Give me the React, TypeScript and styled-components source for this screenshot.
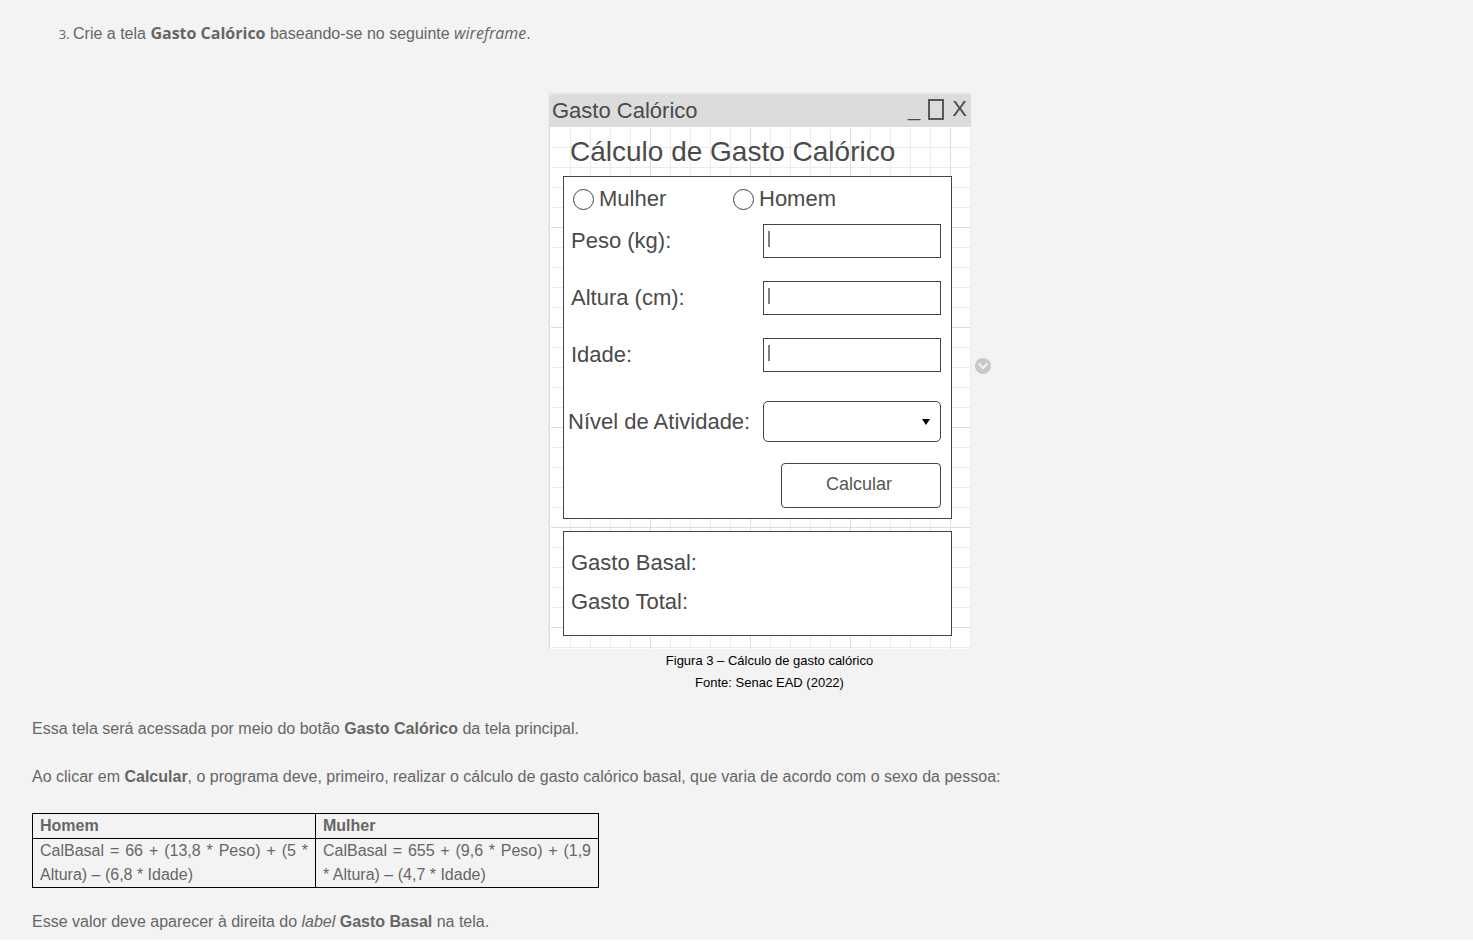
import React from "react";
import styled, { createGlobalStyle } from "styled-components";

const GlobalStyle = createGlobalStyle`
  *, *::before, *::after { box-sizing: border-box; }
  body {
    margin: 0;
    background: #fff;
    font-family: "Liberation Sans", Arial, sans-serif;
  }
`;

const Page = styled.main`
  padding: 21px 32px 6px;
  background: #f3f3f3;
  color: #666;
  font-size: 16px;
  line-height: 24px;
`;

const Steps = styled.ol`
  margin: 0;
  padding-left: 41px;
  font-family: "Open Sans", sans-serif;

  li::marker {
    font-size: 13px;
  }
`;

const StepText = styled.span`
  font-family: "Liberation Sans", Arial, sans-serif;

  strong, em {
    font-family: "Open Sans", sans-serif;
  }
`;

const Figure = styled.figure`
  display: flex;
  flex-direction: column;
  align-items: center;
  margin: 46px 0 23px 66px;
`;

const FigureRow = styled.div`
  display: flex;
  align-items: center;
  gap: 4px;
`;

const Caption = styled.figcaption`
  margin-top: 1px;
  color: #000;
  font-size: 13px;
  line-height: 22px;
  text-align: center;
`;

const ExpandButton = styled.button`
  display: flex;
  width: 16px;
  height: 16px;
  margin: 0 0 10px;
  padding: 0;
  border: 0;
  border-radius: 50%;
  background: #c8c8c8;
`;

const Wireframe = styled.section`
  width: 423px;
  border-top: 2px solid #ececec;
  border-left: 1px solid #ececec;
  background: #ececec;
  color: #4a4a4a;
  font-size: 22px;
`;

const TitleBar = styled.header`
  display: flex;
  align-items: center;
  justify-content: space-between;
  height: 33px;
  padding: 0 4px 0 3px;
  border-top-left-radius: 5px;
  background: #dcdcdc;
`;

const WindowControls = styled.div`
  display: flex;
  align-items: center;
  gap: 8px;
`;

const WindowButton = styled.button`
  display: flex;
  padding: 0 0 4px;
  border: 0;
  background: none;
  color: inherit;
  font: inherit;
  line-height: 24px;
`;

const Canvas = styled.div`
  padding: 0 19px 13px 13px;
  border-left: 1px solid #dcdcdc;
  background:
    linear-gradient(#fff, #fff) 0 0 / 1px 100% no-repeat,
    linear-gradient(#fff, #fff) 0 0 / 100% 1px no-repeat,
    linear-gradient(#dedede 1px, transparent 1px) 0 0 / 100px 100px,
    linear-gradient(90deg, #dedede 1px, transparent 1px) 0 0 / 100px 100px,
    linear-gradient(#ececec 1px, transparent 1px) 0 0 / 20px 20px,
    linear-gradient(90deg, #ececec 1px, transparent 1px) 0 0 / 20px 20px,
    #fff;
`;

const Heading = styled.h2`
  margin: 0;
  padding-left: 7px;
  font-size: 28px;
  font-weight: 400;
  line-height: 49px;
`;

const FormPanel = styled.form`
  display: flex;
  flex-direction: column;
  padding: 0 10px 10px 0;
  border: 1px solid #444;
  background: #fff;
`;

const RadioRow = styled.div`
  display: flex;
  padding: 0 0 3px 9px;
`;

const RadioOption = styled.label`
  display: flex;
  align-items: center;
  gap: 5px;
  width: 160px;
  line-height: 44px;
`;

const Radio = styled.input`
  appearance: none;
  width: 21px;
  height: 21px;
  margin: 0;
  border: 1px solid #444;
  border-radius: 50%;
  background: #fff;
`;

const Fields = styled.div`
  display: flex;
  flex-direction: column;
  gap: 23px;
`;

const Field = styled.div<{ $wide?: boolean }>`
  display: flex;
  align-items: center;
  justify-content: space-between;
  padding-left: ${({ $wide }) => ($wide ? 4 : 7)}px;
  margin-top: ${({ $wide }) => ($wide ? 6 : 0)}px;
`;

const TextBox = styled.input`
  width: 178px;
  height: 34px;
  padding: 0 8px;
  border: 1px solid #444;
  background: linear-gradient(#808080, #808080) 4px 6px / 2px 16px no-repeat #fff;
  color: inherit;
  font: inherit;
`;

const SelectBox = styled.div`
  position: relative;
  width: 178px;

  svg {
    position: absolute;
    top: 18px;
    right: 11px;
    pointer-events: none;
  }
`;

const Select = styled.select`
  appearance: none;
  display: block;
  width: 100%;
  height: 41px;
  border: 1px solid #444;
  border-radius: 5px;
  background: #fff;
  color: inherit;
  font: inherit;
`;

const SubmitButton = styled.button`
  align-self: flex-end;
  width: 160px;
  height: 45px;
  margin-top: 21px;
  padding: 0 4px 4px 0;
  border: 1px solid #444;
  border-radius: 4px;
  background: #fff;
  color: #555;
  font: inherit;
  font-size: 18px;
`;

const ResultPanel = styled.div`
  margin-top: 12px;
  padding: 11px 7px 14px;
  border: 1px solid #444;
  background: #fff;
`;

const ResultLine = styled.div`
  line-height: 39px;
`;

const Paragraph = styled.p`
  margin: 0 0 24px;

  &:last-child {
    margin: 0;
  }
`;

const FormulaTable = styled.table`
  width: 567px;
  max-width: 100%;
  margin: 24px 0 22px;
  border-collapse: collapse;
  table-layout: fixed;

  th, td {
    padding: 0 7px;
    border: 1px solid #000;
    text-align: justify;
    vertical-align: top;
  }
`;

const measures = [
  { id: "peso", label: "Peso (kg):" },
  { id: "altura", label: "Altura (cm):" },
  { id: "idade", label: "Idade:" },
];

export default function App() {
  return (
    <>
      <GlobalStyle />
      <Page>
        <Steps start={3}>
          <li>
            <StepText>
              Crie a tela <strong>Gasto Calórico</strong> baseando-se no seguinte <em>wireframe</em>.
            </StepText>
          </li>
        </Steps>

        <Figure>
          <FigureRow>
            <Wireframe>
              <TitleBar>
                <span>Gasto Calórico</span>
                <WindowControls>
                  <WindowButton type="button" aria-label="Minimizar">_</WindowButton>
                  <WindowButton type="button" aria-label="Maximizar">
                    <svg width="16" height="22" viewBox="0 0 16 22" fill="none" stroke="#4a4a4a" strokeWidth="1.8">
                      <rect x="1" y="2" width="14" height="19" />
                    </svg>
                  </WindowButton>
                  <WindowButton type="button" aria-label="Fechar">X</WindowButton>
                </WindowControls>
              </TitleBar>
              <Canvas>
                <Heading>Cálculo de Gasto Calórico</Heading>
                <FormPanel onSubmit={(e) => e.preventDefault()}>
                  <RadioRow>
                    <RadioOption>
                      <Radio type="radio" name="sexo" value="mulher" />
                      Mulher
                    </RadioOption>
                    <RadioOption>
                      <Radio type="radio" name="sexo" value="homem" />
                      Homem
                    </RadioOption>
                  </RadioRow>
                  <Fields>
                    {measures.map(({ id, label }) => (
                      <Field key={id}>
                        <label htmlFor={id}>{label}</label>
                        <TextBox id={id} type="text" />
                      </Field>
                    ))}
                    <Field $wide>
                      <label htmlFor="nivel">Nível de Atividade:</label>
                      <SelectBox>
                        <Select id="nivel" defaultValue="">
                          <option value="" />
                        </Select>
                        <svg width="8" height="6" viewBox="0 0 8 6" aria-hidden="true">
                          <path d="M0 0H8L4 6Z" fill="#000" />
                        </svg>
                      </SelectBox>
                    </Field>
                  </Fields>
                  <SubmitButton type="submit">Calcular</SubmitButton>
                </FormPanel>
                <ResultPanel>
                  <ResultLine>Gasto Basal:</ResultLine>
                  <ResultLine>Gasto Total:</ResultLine>
                </ResultPanel>
              </Canvas>
            </Wireframe>
            <ExpandButton type="button" aria-label="Expandir imagem">
              <svg width="16" height="16" viewBox="0 0 16 16" fill="none" stroke="#f3f3f3" strokeWidth="2">
                <path d="M3.5 5.5L8 10L12.5 5.5" />
              </svg>
            </ExpandButton>
          </FigureRow>
          <Caption>
            Figura 3 – Cálculo de gasto calórico
            <br />
            Fonte: Senac EAD (2022)
          </Caption>
        </Figure>

        <Paragraph>
          Essa tela será acessada por meio do botão <strong>Gasto Calórico</strong> da tela principal.
        </Paragraph>
        <Paragraph>
          Ao clicar em <strong>Calcular</strong>, o programa deve, primeiro, realizar o cálculo de gasto
          calórico basal, que varia de acordo com o sexo da pessoa:
        </Paragraph>
        <FormulaTable>
          <thead>
            <tr>
              <th scope="col">Homem</th>
              <th scope="col">Mulher</th>
            </tr>
          </thead>
          <tbody>
            <tr>
              <td>CalBasal = 66 + (13,8 * Peso) + (5 * Altura) – (6,8 * Idade)</td>
              <td>CalBasal = 655 + (9,6 * Peso) + (1,9 * Altura) – (4,7 * Idade)</td>
            </tr>
          </tbody>
        </FormulaTable>
        <Paragraph>
          Esse valor deve aparecer à direita do <em>label</em> <strong>Gasto Basal</strong> na tela.
        </Paragraph>
      </Page>
    </>
  );
}
